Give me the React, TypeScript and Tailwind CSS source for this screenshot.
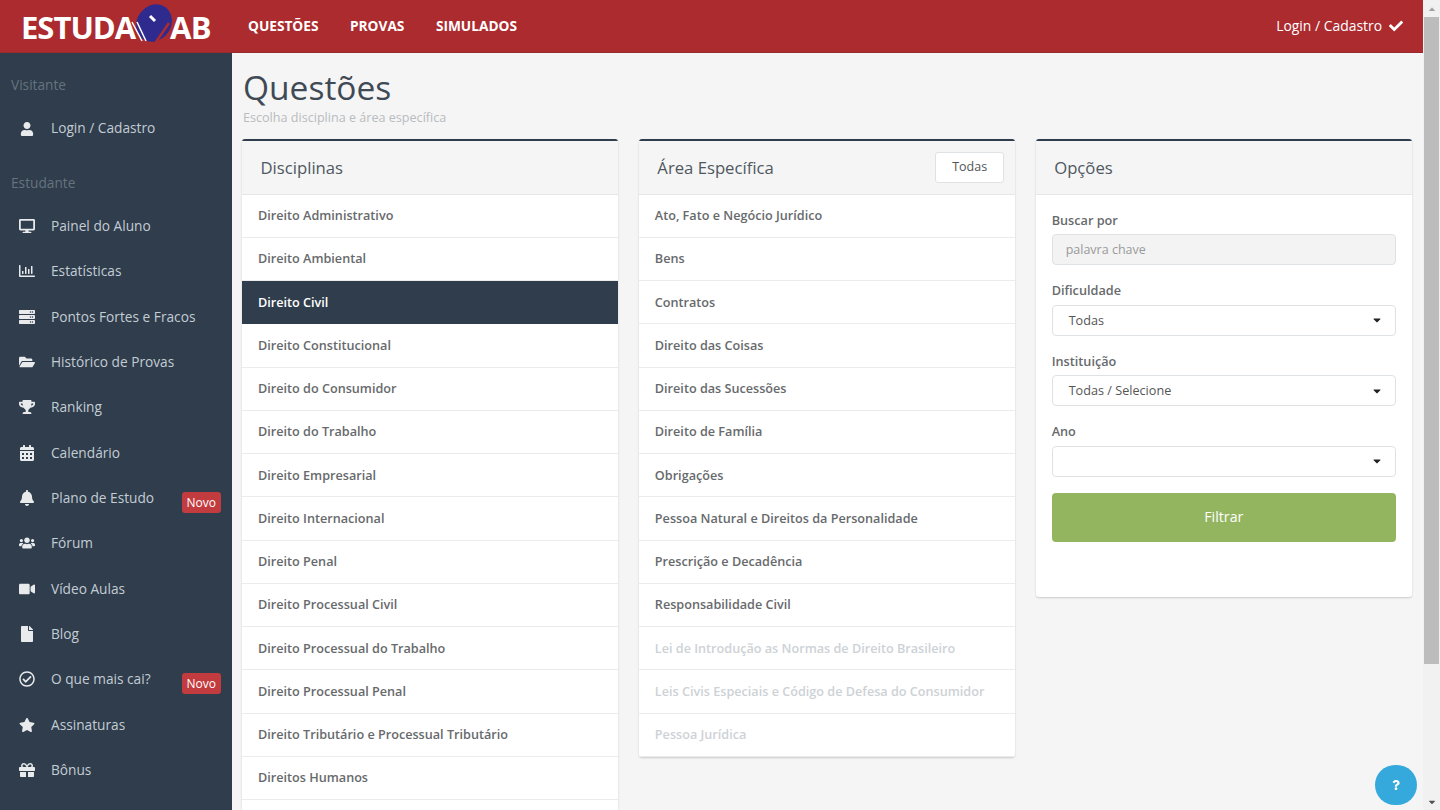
import React from "react";
import {
  FaUser, FaDesktop, FaServer, FaFolderOpen, FaTrophy, FaCalendarAlt, FaBell, FaUsers,
  FaVideo, FaFile, FaRegCheckCircle, FaStar, FaGift, FaCheck, FaQuestion, FaRegChartBar, FaCaretDown, FaCaretUp,
} from "react-icons/fa";

const font = "font-['Open_Sans',sans-serif]";

const navItems = [
  { label: "Painel do Aluno", icon: <FaDesktop /> },
  { label: "Estatísticas", icon: <FaRegChartBar /> },
  { label: "Pontos Fortes e Fracos", icon: <FaServer /> },
  { label: "Histórico de Provas", icon: <FaFolderOpen /> },
  { label: "Ranking", icon: <FaTrophy /> },
  { label: "Calendário", icon: <FaCalendarAlt /> },
  { label: "Plano de Estudo", icon: <FaBell />, badge: true },
  { label: "Fórum", icon: <FaUsers /> },
  { label: "Vídeo Aulas", icon: <FaVideo /> },
  { label: "Blog", icon: <FaFile /> },
  { label: "O que mais cai?", icon: <FaRegCheckCircle />, badge: true },
  { label: "Assinaturas", icon: <FaStar /> },
  { label: "Bônus", icon: <FaGift /> },
];

const disciplinas = [
  "Direito Administrativo", "Direito Ambiental", "Direito Civil", "Direito Constitucional",
  "Direito do Consumidor", "Direito do Trabalho", "Direito Empresarial", "Direito Internacional",
  "Direito Penal", "Direito Processual Civil", "Direito Processual do Trabalho", "Direito Processual Penal",
  "Direito Tributário e Processual Tributário", "Direitos Humanos", "",
];

const areas = [
  "Ato, Fato e Negócio Jurídico", "Bens", "Contratos", "Direito das Coisas", "Direito das Sucessões",
  "Direito de Família", "Obrigações", "Pessoa Natural e Direitos da Personalidade",
  "Prescrição e Decadência", "Responsabilidade Civil",
];
const areasOff = [
  "Lei de Introdução as Normas de Direito Brasileiro",
  "Leis Civis Especiais e Código de Defesa do Consumidor",
  "Pessoa Jurídica",
];

const Logo = () => (
  <div className="flex items-center w-[232px] pl-[21px] shrink-0">
    <span className="w-[108px] text-[31px] leading-none font-bold text-white tracking-[-1px] mt-[3px]">ESTUDA</span>
    <svg viewBox="0 0 44 46" className="w-[44px] h-[46px] -mt-[6px] -mr-[3px] shrink-0">
      <ellipse cx="25" cy="23" rx="17" ry="19.5" transform="rotate(35 25 23)" fill="#2f2a8e" />
      <path d="M3 22 L13 41 M8 22 L17 41" fill="none" stroke="#fff" strokeWidth="1.5" />
      <path d="M21 16 L26 21" stroke="#fff" strokeWidth="3" />
      <path d="M27 42 L40 23" stroke="#ab2b2f" strokeWidth="2.5" />
    </svg>
    <span className="text-[31px] leading-none font-bold text-white tracking-[-0.6px] mt-[3px]">AB</span>
  </div>
);

const Header = () => (
  <header className="h-[53px] bg-[#ab2b2f] border-b border-[#9b2a2d] flex items-center shrink-0">
    <Logo />
    <nav className="flex gap-[31.5px] ml-[16px] mt-[1px] text-[13.7px] font-bold text-white">
      <span>QUESTÕES</span>
      <span>PROVAS</span>
      <span>SIMULADOS</span>
    </nav>
    <div className="ml-auto mr-[20px] mt-[1px] flex items-center gap-[7px] text-[13.9px] text-white">
      Login / Cadastro <FaCheck className="text-[14px]" />
    </div>
  </header>
);

const NavRow = ({ label, icon, badge, className = "h-[45.33px]" }: any) => (
  <div className={`flex items-center pl-[18px] pr-[11px] text-[13.7px] text-[#c4ccd4] ${className}`}>
    <span className="w-[17px] flex justify-center text-[16px] text-[#e8eaec] mr-[16px]">{icon}</span>
    <span>{label}</span>
    {badge && (
      <span className="ml-auto mt-[8px] h-[21px] px-[5px] rounded-[3px] bg-[#c23b3e] text-white text-[12px] leading-[21px]">
        Novo
      </span>
    )}
  </div>
);

const Sidebar = () => (
  <aside className="w-[232px] shrink-0 bg-[#2f3d4c] overflow-hidden">
    <div className="pl-[11px] pt-[22px] text-[13.7px] leading-[19px] text-[#66737f]">Visitante</div>
    <NavRow label="Login / Cadastro" icon={<FaUser className="text-[14px]" />} className="h-[45px] mt-[12px]" />
    <div className="pl-[11px] pt-[22px] text-[13.7px] leading-[19px] text-[#66737f] mb-[11.5px]">Estudante</div>
    {navItems.map((n) => (
      <NavRow key={n.label} {...n} />
    ))}
  </aside>
);

const Panel = ({ title, action, children }: any) => (
  <section className="flex-1 min-w-0 self-start rounded-[3px] border-t-2 border-[#2f3d4c] bg-white shadow-[0_1px_2px_rgba(0,0,0,0.18)]">
    <div className="h-[53.5px] bg-[#f5f5f5] border-b border-[#e7e7e7] flex items-center pl-[18.5px] pr-[11px]">
      <h2 className="text-[16.7px] text-[#4f5861]">{title}</h2>
      {action}
    </div>
    {children}
  </section>
);

const Row = ({ label, active, off }: any) => (
  <div
    className={`h-[43.25px] flex items-center pl-[16px] text-[12.65px] font-semibold border-b ${
      active
        ? "bg-[#2f3d4c] text-white border-[#2f3d4c]"
        : off
          ? "text-[#cdd2d6] border-[#ececec]"
          : "text-[#676a6c] border-[#ececec]"
    }`}
  >
    {label}
  </div>
);

const Field = ({ label, children }: any) => (
  <div className="mb-[16px]">
    <div className="text-[12.7px] font-semibold leading-[18px] text-[#676a6c] mb-[5.5px]">{label}</div>
    {children}
  </div>
);

const Select = ({ value }: { value?: string }) => (
  <div className="h-[31px] rounded-[4px] border border-[#dfe2e5] bg-white flex items-center pl-[16px] pr-[12px] text-[12.65px] text-[#555]">
    {value}
    <FaCaretDown className="ml-auto text-[12px] text-[#222]" />
  </div>
);

const Scrollbar = () => (
  <div className="w-[17px] shrink-0 bg-[#f1f1f1] flex flex-col items-center">
    <div className="h-[17px] flex items-center justify-center text-[#a3a3a3] text-[10px]"><FaCaretUp /></div>
    <div className="w-[15px] h-[647px] bg-[#bcbcbc]" />
    <div className="mt-auto h-[17px] flex items-center justify-center text-[#505050] text-[10px]"><FaCaretDown /></div>
  </div>
);

export default function App() {
  return (
    <div className={`${font} h-[810px] w-[1440px] flex overflow-hidden bg-[#f5f5f5] relative`}>
      <div className="flex-1 min-w-0 flex flex-col">
        <Header />
        <div className="flex flex-1 min-h-0">
          <Sidebar />
          <main className="flex-1 min-w-0 overflow-hidden pl-[10px] pr-[11px]">
            <h1 className="text-[33.5px] leading-[46px] mt-[11px] pl-[1px] text-[#3f4a55]">Questões</h1>
            <p className="text-[12.6px] leading-[16px] pl-[1px] text-[#b8bcc0] mb-[13px]">Escolha disciplina e área específica</p>
            <div className="flex gap-[20.5px]">
              <Panel title="Disciplinas">
                {disciplinas.map((d) => (
                  <Row key={d} label={d} active={d === "Direito Civil"} />
                ))}
              </Panel>
              <Panel
                title="Área Específica"
                action={
                  <button className="ml-auto h-[31px] px-[16px] rounded-[3px] border border-[#dfe2e5] bg-white text-[12.5px] text-[#555]">
                    Todas
                  </button>
                }
              >
                {areas.map((a) => (
                  <Row key={a} label={a} />
                ))}
                {areasOff.map((a) => (
                  <Row key={a} label={a} off />
                ))}
              </Panel>
              <Panel title="Opções">
                <div className="px-[16px] pt-[16px] pb-[55px]">
                  <Field label="Buscar por">
                    <div className="h-[31px] rounded-[4px] border border-[#dfe2e5] bg-[#f3f3f3] flex items-center pl-[13px] pt-[1px] text-[12.5px] text-[#9a9a9a]">
                      palavra chave
                    </div>
                  </Field>
                  <Field label="Dificuldade"><Select value="Todas" /></Field>
                  <Field label="Instituição"><Select value="Todas / Selecione" /></Field>
                  <Field label="Ano"><Select /></Field>
                  <button className="w-full h-[49px] rounded-[4px] bg-[#93b55f] text-white text-[14.2px]">Filtrar</button>
                </div>
              </Panel>
            </div>
          </main>
        </div>
      </div>
      <Scrollbar />
      <div className="absolute left-[1375px] top-[765px] w-[42px] h-[40px] rounded-full bg-[#36a9dc] flex items-center justify-center text-white text-[10px]">
        <FaQuestion />
      </div>
    </div>
  );
}
